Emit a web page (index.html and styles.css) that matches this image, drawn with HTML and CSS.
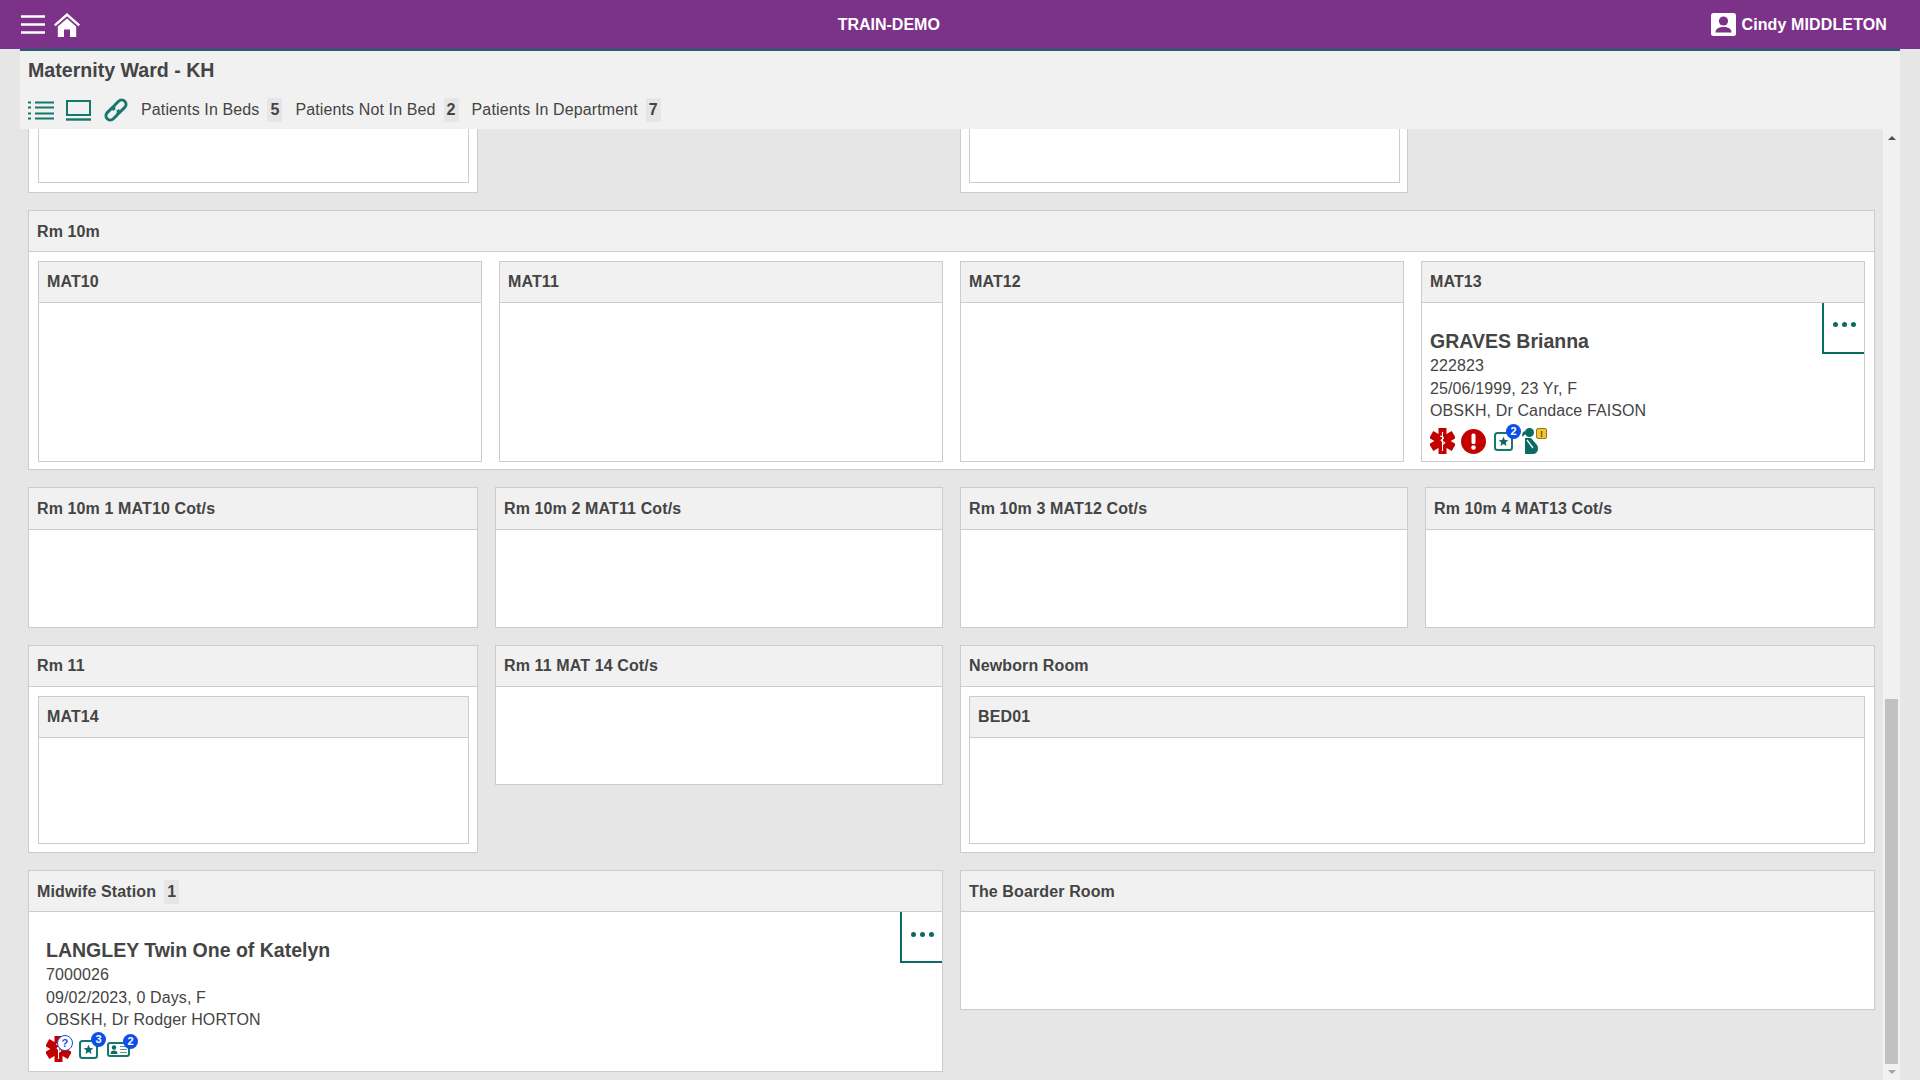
FILE: index.html
```html
<!DOCTYPE html>
<html lang="en">
  <head>
    <meta charset="UTF-8" />
    <meta name="viewport" content="width=device-width, initial-scale=1.0" />
    <title>Maternity Ward - KH</title>
    <link rel="stylesheet" href="styles.css">
  </head>
  <body>
    <svg class="defs" width="0" height="0">
      <defs>
        <g id="star-life">
          <rect x="8.500" y="0" width="8" height="26" fill="#c30000" />
          <rect x="8.500" y="0" width="8" height="26" fill="#c30000" transform="rotate(60 12.5 13)" />
          <rect x="8.500" y="0" width="8" height="26" fill="#c30000" transform="rotate(120 12.5 13)" />
          <path d="M12.5 4V23M10 8c4 1 4 2 2.500 3s-2.500 2 1 3-1.500 2-1 3" fill="none" stroke="#fff" stroke-width="1.100" />
        </g>
        <g id="star-box">
          <rect x="1" y="1" width="17" height="17" rx="2.5" fill="#fff" stroke="#16776c" stroke-width="2" />
          <path d="M9.5 4.8l1.4 3.2 3.4.3-2.6 2.2.8 3.4-3-1.8-3 1.8.8-3.4-2.6-2.2 3.4-.3z" fill="#0b6b62" />
        </g>
      </defs>
    </svg>

    <header class="topbar">
      <div class="top-left">
        <svg class="burger" width="24" height="19" viewBox="0 0 24 19">
          <path d="M0 1.5H24M0 9.5H24M0 17.5H24" stroke="#fff" stroke-width="2.4" />
        </svg>
        <svg class="home" width="26" height="24" viewBox="0 0 26 24">
          <path d="M13 0L0 11.5l1.6 1.8L13 3.3l11.4 10 1.6-1.8z" fill="#fff" />
          <path d="M13 5.5L3.8 13.5V24H10V16.5H16V24H22.2V13.5z" fill="#fff" />
        </svg>
      </div>
      <div class="top-title">TRAIN-DEMO</div>
      <div class="top-user">
        <svg width="25" height="23" viewBox="0 0 25 23">
          <rect width="25" height="23" rx="2.5" fill="#fff" />
          <circle cx="12.5" cy="8" r="4.6" fill="#7c3288" />
          <path d="M4.5 19.5c0-4 3.5-5.5 8-5.5s8 1.500 8 5.500z" fill="#7c3288" />
        </svg>
        <span>Cindy MIDDLETON</span>
      </div>
    </header>

    <div class="page">
      <section class="subhead">
        <h1 class="ward">Maternity Ward - KH</h1>
        <div class="tools">
          <svg width="26" height="19" viewBox="0 0 26 19">
            <path d="M7 1.500H26M7 6.500H26M7 12.500H26M7 17.500H26M0 1.500H3M0 6.500H3M0 12.500H3M0 17.500H3" stroke="#16776c" stroke-width="2" />
          </svg>
          <svg class="tool-laptop" width="25" height="21" viewBox="0 0 25 21">
            <rect x="1" y="1" width="23" height="14" fill="none" stroke="#16776c" stroke-width="2" />
            <path d="M0 19.500H25" stroke="#16776c" stroke-width="2.400" />
          </svg>
          <svg class="tool-link" width="28" height="28" viewBox="0 0 26 26">
            <g transform="rotate(-45 13 13)" fill="none" stroke="#16776c" stroke-width="2.800">
              <path d="M14 9H5.500a4 4 0 0 0 0 8H10.500a4 4 0 0 0 3.800-3" />
              <path d="M12 17H20.500a4 4 0 0 0 0-8H15.500a4 4 0 0 0-3.800 3" />
            </g>
          </svg>
          <span class="stat first">Patients In Beds</span><span class="count">5</span>
          <span class="stat">Patients Not In Bed</span><span class="count">2</span>
          <span class="stat">Patients In Department</span><span class="count">7</span>
        </div>
      </section>

      <div class="body-wrap">
        <main class="board">
          <div class="cut-card"><div class="cut-inner"></div></div>
          <div class="cut-spacer"></div>
          <div class="cut-card cut-right"><div class="cut-inner"></div></div>
          <div class="cut-spacer"></div>

          <section class="panel span-4">
            <div class="panel-head nudge">Rm 10m</div>
            <div class="beds">
              <div class="bed">
                <div class="panel-head">MAT10</div>
                <div class="bed-body"></div>
              </div>
              <div class="bed">
                <div class="panel-head">MAT11</div>
                <div class="bed-body"></div>
              </div>
              <div class="bed">
                <div class="panel-head">MAT12</div>
                <div class="bed-body"></div>
              </div>
              <div class="bed">
                <div class="panel-head">MAT13</div>
                <div class="bed-body patient in-bed">
                  <button class="more"><i></i><i></i><i></i></button>
                  <div class="name">GRAVES Brianna</div>
                  <div class="line">222823</div>
                  <div class="line">25/06/1999, 23 Yr, F</div>
                  <div class="line">OBSKH, Dr Candace FAISON</div>
                  <div class="icons">
                    <svg width="25" height="26" viewBox="0 0 25 26"><use href="#star-life" /></svg>
                    <svg class="near" width="25" height="25" viewBox="0 0 25 25">
                      <circle cx="12.500" cy="12.500" r="12.500" fill="#c30000" />
                      <rect x="10.500" y="4.500" width="4" height="10.500" rx="1.500" fill="#fff" />
                      <circle cx="12.500" cy="18.500" r="2.300" fill="#fff" />
                    </svg>
                    <span class="ico">
                      <svg width="19" height="19" viewBox="0 0 19 19"><use href="#star-box" /></svg>
                      <b class="blue">2</b>
                    </span>
                    <span class="ico far">
                      <svg width="17" height="26" viewBox="0 0 17 26">
                        <circle cx="7.500" cy="4.500" r="4.500" fill="#0b6b62" />
                        <path d="M3 3C0 4 0 7 .500 9 1.500 7.500 2.500 6.500 4 6z" fill="#0b6b62" />
                        <path d="M3 10H9L15 17C17 20 16 26 11 26H3z" fill="#0b6b62" />
                        <path d="M5 12L11 20" stroke="#fff" stroke-width="1.300" />
                      </svg>
                      <b class="warn">!</b>
                    </span>
                  </div>
                </div>
              </div>
            </div>
          </section>

          <section class="panel">
            <div class="panel-head tall">Rm 10m 1 MAT10 Cot/s</div>
            <div class="panel-empty low"></div>
          </section>
          <section class="panel">
            <div class="panel-head tall">Rm 10m 2 MAT11 Cot/s</div>
            <div class="panel-empty low"></div>
          </section>
          <section class="panel">
            <div class="panel-head tall">Rm 10m 3 MAT12 Cot/s</div>
            <div class="panel-empty low"></div>
          </section>
          <section class="panel">
            <div class="panel-head tall">Rm 10m 4 MAT13 Cot/s</div>
            <div class="panel-empty low"></div>
          </section>

          <section class="panel">
            <div class="panel-head">Rm 11</div>
            <div class="beds single first-col">
              <div class="bed">
                <div class="panel-head">MAT14</div>
                <div class="bed-body short"></div>
              </div>
            </div>
          </section>
          <section class="panel">
            <div class="panel-head">Rm 11 MAT 14 Cot/s</div>
            <div class="panel-empty low"></div>
          </section>
          <section class="panel span-2">
            <div class="panel-head">Newborn Room</div>
            <div class="beds single newborn">
              <div class="bed">
                <div class="panel-head">BED01</div>
                <div class="bed-body short"></div>
              </div>
            </div>
          </section>

          <section class="panel span-2">
            <div class="panel-head nudge">Midwife Station<span class="count">1</span></div>
            <div class="patient in-room">
              <button class="more"><i></i><i></i><i></i></button>
              <div class="name">LANGLEY Twin One of Katelyn</div>
              <div class="line">7000026</div>
              <div class="line">09/02/2023, 0 Days, F</div>
              <div class="line">OBSKH, Dr Rodger HORTON</div>
              <div class="icons">
                <span class="ico">
                  <svg width="25" height="26" viewBox="0 0 25 26"><use href="#star-life" /></svg>
                  <b class="ask">?</b>
                </span>
                <span class="ico">
                  <svg width="19" height="19" viewBox="0 0 19 19"><use href="#star-box" /></svg>
                  <b class="blue">3</b>
                </span>
                <span class="ico far">
                  <svg width="23" height="15" viewBox="0 0 23 15">
                    <rect x="1" y="1" width="21" height="13" rx="2" fill="#fff" stroke="#16776c" stroke-width="2" />
                    <circle cx="7" cy="5.500" r="2.200" fill="#0b6b62" />
                    <path d="M3.500 12c0-2.500 1.500-3.500 3.500-3.500s3.500 1 3.500 3.500z" fill="#0b6b62" />
                    <path d="M13 4.500H20M13 7.500H20M13 10.500H20" stroke="#5d9c94" stroke-width="1.200" />
                  </svg>
                  <b class="blue">2</b>
                </span>
              </div>
            </div>
          </section>
          <section class="panel span-2">
            <div class="panel-head nudge">The Boarder Room</div>
            <div class="panel-empty low"></div>
          </section>
        </main>

        <div class="scrollbar">
          <span class="arrow-up"></span>
          <div class="thumb"></div>
          <span class="arrow-down"></span>
        </div>
      </div>
    </div>
  </body>
</html>
```

FILE: styles.css
```css
* {
  margin: 0px;
  padding: 0px;
  box-sizing: border-box;
}
body {
  width: 100vw;
  height: 100vh;
  overflow: hidden;
  background-color: #e6e6e6;
  color: #444444;
  font-family: "Liberation Sans", Arial, sans-serif;
  font-size: 16px;
  letter-spacing: 0.12px;
}
.defs {
  display: block;
  height: 0;
}

.topbar {
  height: 49px;
  padding: 0 33px 0 21px;
  display: flex;
  align-items: center;
  background-color: #7c3288;
  color: #ffffff;
  font-weight: bold;
}
.top-left {
  display: flex;
  align-items: center;
  gap: 9px;
}
.top-title {
  flex: 1;
  margin-right: 14px;
  text-align: center;
  letter-spacing: 0;
}
.top-user {
  display: flex;
  align-items: center;
  gap: 5px;
}

.page {
  margin: 0 20px;
  height: 1031px;
  display: flex;
  flex-direction: column;
}
.subhead {
  height: 80px;
  padding: 7px 8px 0;
  background-color: #f1f1f1;
  border-top: 2px solid #1d6468;
}
.ward {
  font-size: 19.6px;
  line-height: 24px;
  letter-spacing: 0;
}
.tools {
  margin-top: 16px;
  height: 24px;
  display: flex;
  align-items: center;
}
.tool-laptop {
  margin-left: 12px;
}
.tool-link {
  margin-left: 11px;
}
.stat {
  margin-left: 13px;
}
.stat.first {
  margin-left: 11px;
}
.count {
  display: inline-block;
  margin-left: 8px;
  width: 15px;
  height: 24px;
  line-height: 24px;
  text-align: center;
  background-color: #e6e6e6;
  font-weight: bold;
}

.body-wrap {
  flex: 1;
  min-height: 0;
  display: flex;
}
.board {
  flex: 1;
  min-width: 0;
  padding: 0 8px;
  display: grid;
  grid-template-columns: 450px 448px 448px 450px;
  grid-auto-rows: min-content;
  gap: 17px;
  align-items: start;
  overflow: hidden;
}
.cut-card {
  height: 64px;
  padding: 0 7px 9px 8px;
  background-color: #ffffff;
  border: 1px solid #cccccc;
  border-top: 0;
}
.cut-card:first-child {
  padding: 0 8px 9px 9px;
}
.cut-inner {
  height: 100%;
  border: 1px solid #cccccc;
  border-top: 0;
}

.panel {
  background-color: #ffffff;
  border: 1px solid #cccccc;
}
.span-4 {
  grid-column: span 4;
}
.span-2 {
  grid-column: span 2;
}
.panel-head {
  height: 41px;
  padding: 0 8px;
  display: flex;
  align-items: center;
  background-color: #f1f1f1;
  border-bottom: 1px solid #cccccc;
  font-weight: bold;
}
.panel-head.tall {
  height: 42px;
}
.panel-head.nudge {
  padding-top: 1px;
}
.panel-empty {
  height: 98px;
}
.panel-empty.low {
  height: 97px;
}
.beds {
  padding: 9px 9px 7px;
  display: grid;
  grid-template-columns: repeat(4, 1fr);
  gap: 17px;
}
.beds.single {
  padding: 9px 9px 8px;
  grid-template-columns: 1fr;
}
.beds.first-col {
  padding-right: 8px;
}
.beds.newborn {
  padding-left: 8px;
}
.bed {
  border: 1px solid #cccccc;
}
.bed-body {
  height: 158px;
}
.bed-body.short {
  height: 105px;
}

.patient {
  position: relative;
}
.in-bed {
  padding: 26px 8px 0;
}
.in-room {
  height: 159px;
  padding: 26px 17px 0;
}
.name {
  font-size: 19.5px;
  line-height: 24px;
  font-weight: bold;
  margin-bottom: 2px;
  letter-spacing: 0;
}
.line {
  line-height: 22.7px;
}
.icons {
  margin-top: 5px;
  display: flex;
  align-items: center;
  gap: 8px;
}
.in-room .icons {
  margin-top: 4px;
}
.near {
  margin-left: -2px;
}
.far {
  margin-left: 1px;
}
.ico {
  position: relative;
  display: inline-flex;
}
.ico b {
  position: absolute;
  text-align: center;
  font-size: 11px;
}
.ico .blue {
  top: -8px;
  right: -8px;
  width: 15px;
  height: 15px;
  line-height: 15px;
  border-radius: 50%;
  background-color: #0d4fe8;
  color: #ffffff;
}
.ico .warn {
  top: 0;
  right: -8px;
  width: 11px;
  height: 11px;
  line-height: 10px;
  font-size: 9px;
  border: 1px solid #8f7a1e;
  border-radius: 2px;
  background-color: #f2c531;
  color: #5c4a00;
}
.ico .ask {
  top: -1px;
  right: -2px;
  width: 16px;
  height: 16px;
  line-height: 14px;
  border: 1px solid #0d4fe8;
  border-radius: 50%;
  background-color: #ffffff;
  color: #0d4fe8;
}
.more {
  position: absolute;
  top: 0;
  right: 0;
  width: 42px;
  height: 51px;
  padding-top: 19px;
  display: flex;
  justify-content: center;
  align-items: flex-start;
  gap: 4px;
  background-color: #ffffff;
  border: 0;
  border-left: 2px solid #0b6b62;
  border-bottom: 2px solid #0b6b62;
}
.in-room .more {
  padding-top: 20px;
}
.more i {
  width: 5px;
  height: 5px;
  border-radius: 50%;
  background-color: #0b6b62;
}

.scrollbar {
  width: 17px;
  padding: 0 2px;
  display: flex;
  flex-direction: column;
  align-items: center;
  background-color: #f1f1f1;
}
.arrow-up {
  margin-top: 7px;
  border: 4px solid transparent;
  border-top: 0;
  border-bottom: 4px solid #505050;
}
.thumb {
  margin-top: auto;
  width: 13px;
  height: 365px;
  background-color: #c1c1c1;
}
.arrow-down {
  margin: 6px 0 6px;
  border: 4px solid transparent;
  border-bottom: 0;
  border-top: 4px solid #a3a3a3;
}
```
